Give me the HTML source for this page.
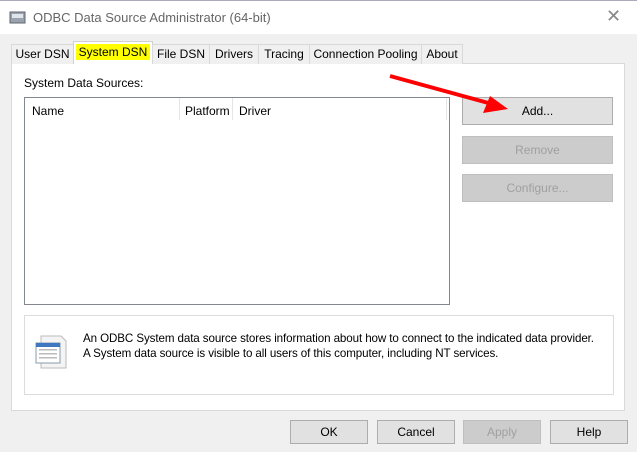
<!DOCTYPE html>
<html><head><style>
*{margin:0;padding:0;box-sizing:border-box}
body{width:637px;height:452px;background:#f0f0f0;font-family:"Liberation Sans",sans-serif;font-size:12px;color:#000;position:relative;overflow:hidden}
.a{position:absolute}
.title{left:0;top:0;width:637px;height:34px;background:#fff;border-top:1px solid #aab}
.tab{top:44px;height:20px;border:1px solid #d9d9d9;border-bottom:none;background:#f0f0f0;text-align:center;line-height:18px}
.panel{left:11px;top:63px;width:614px;height:348px;background:#fff;border:1px solid #d9d9d9}
.btn{border:1px solid #adadad;background:#e1e1e1;text-align:center;line-height:25px}
.dis{color:#a0a0a0;background:#ccc;border-color:#bfbfbf}
</style></head><body>
<div class="a title">
 <svg class="a" style="left:9px;top:9px" width="18" height="16"><rect x="1" y="2" width="15" height="11" fill="#9aa3ad" stroke="#5f6770"/><rect x="3" y="4" width="11" height="4" fill="#dfe5ea"/></svg>
 <div class="a" style="left:33px;top:9px;font-size:13px;color:#666">ODBC Data Source Administrator (64-bit)</div>
 <div class="a" style="left:606px;top:5px;font-size:18px;color:#888">✕</div>
</div>
<div class="a panel"></div>
<div class="a tab" style="left:11px;width:63px">User DSN</div>
<div class="a tab" style="left:73px;top:41px;height:23px;width:80px;background:#fff;border-color:#d0d0d0;line-height:20px"><span style="background:#ffff00;padding:1px 3px">System DSN</span></div>
<div class="a tab" style="left:152px;width:58px">File DSN</div>
<div class="a tab" style="left:209px;width:50px">Drivers</div>
<div class="a tab" style="left:258px;width:52px">Tracing</div>
<div class="a tab" style="left:309px;width:113px">Connection Pooling</div>
<div class="a tab" style="left:421px;width:42px">About</div>
<div class="a" style="left:24px;top:76px">System Data Sources:</div>
<div class="a" style="left:24px;top:97px;width:426px;height:208px;border:1px solid #828790;background:#fff">
 <div class="a" style="left:7px;top:6px">Name</div>
 <div class="a" style="left:154px;top:0;width:1px;height:22px;background:#e5e5e5"></div>
 <div class="a" style="left:160px;top:6px">Platform</div>
 <div class="a" style="left:207px;top:0;width:1px;height:22px;background:#e5e5e5"></div>
 <div class="a" style="left:214px;top:6px">Driver</div>
 <div class="a" style="left:421px;top:0;width:1px;height:22px;background:#e5e5e5"></div>
</div>
<div class="a btn" style="left:462px;top:97px;width:151px;height:28px;line-height:27px">Add...</div>
<div class="a btn dis" style="left:462px;top:136px;width:151px;height:28px;line-height:27px">Remove</div>
<div class="a btn dis" style="left:462px;top:174px;width:151px;height:28px;line-height:27px">Configure...</div>
<div class="a" style="left:24px;top:315px;width:590px;height:80px;border:1px solid #dcdcdc;background:#fff">
 <svg class="a" style="left:9px;top:18px" width="36" height="36"><path d="M7 2h20l5 5v27H7z" fill="#f4f4f4" stroke="#bbb"/><rect x="2" y="9" width="24" height="20" fill="#fff" stroke="#8a9aaa"/><rect x="2" y="9" width="24" height="4" fill="#3f78c0"/><g fill="#bbb"><rect x="5" y="15" width="18" height="1.5"/><rect x="5" y="19" width="18" height="1.5"/><rect x="5" y="23" width="18" height="1.5"/></g></svg>
 <div class="a" style="left:58px;top:15px;line-height:15px;white-space:nowrap;font-size:11.6px;letter-spacing:-0.1px">An ODBC System data source stores information about how to connect to the indicated data provider.<br>A System data source is visible to all users of this computer, including NT services.</div>
</div>
<div class="a btn" style="left:290px;top:420px;width:78px;height:24px;line-height:22px">OK</div>
<div class="a btn" style="left:377px;top:420px;width:78px;height:24px;line-height:22px">Cancel</div>
<div class="a btn dis" style="left:463px;top:420px;width:78px;height:24px;line-height:22px">Apply</div>
<div class="a btn" style="left:550px;top:420px;width:78px;height:24px;line-height:22px">Help</div>
<svg class="a" style="left:0;top:0" width="637" height="452"><line x1="390" y1="76" x2="492" y2="104" stroke="#f00" stroke-width="4"/><polygon points="508,109 483,113 490,96" fill="#f00"/></svg>
</body></html>
